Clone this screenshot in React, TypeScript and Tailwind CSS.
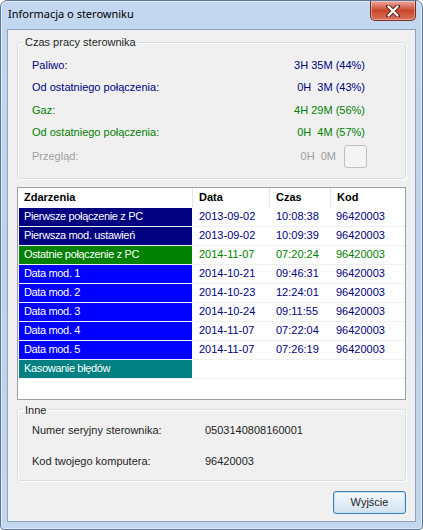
const rows = [
  { name: 'Pierwsze połączenie z PC', date: '2013-09-02', time: '10:08:38', code: '96420003', cell: 'bg-[#000080]', text: 'text-[#000080]' },
  { name: 'Pierwsza mod. ustawień', date: '2013-09-02', time: '10:09:39', code: '96420003', cell: 'bg-[#000080]', text: 'text-[#000080]' },
  { name: 'Ostatnie połączenie z PC', date: '2014-11-07', time: '07:20:24', code: '96420003', cell: 'bg-[#008000]', text: 'text-[#008000]' },
  { name: 'Data mod. 1', date: '2014-10-21', time: '09:46:31', code: '96420003', cell: 'bg-[#0000ff]', text: 'text-[#000080]' },
  { name: 'Data mod. 2', date: '2014-10-23', time: '12:24:01', code: '96420003', cell: 'bg-[#0000ff]', text: 'text-[#000080]' },
  { name: 'Data mod. 3', date: '2014-10-24', time: '09:11:55', code: '96420003', cell: 'bg-[#0000ff]', text: 'text-[#000080]' },
  { name: 'Data mod. 4', date: '2014-11-07', time: '07:22:04', code: '96420003', cell: 'bg-[#0000ff]', text: 'text-[#000080]' },
  { name: 'Data mod. 5', date: '2014-11-07', time: '07:26:19', code: '96420003', cell: 'bg-[#0000ff]', text: 'text-[#000080]' },
  { name: 'Kasowanie błędów', date: '', time: '', code: '', cell: 'bg-[#008080]', text: 'text-[#000080]' },
];

const usage = [
  { label: 'Paliwo:', value: '3H 35M (44%)', color: 'text-[#000080]' },
  { label: 'Od ostatniego połączenia:', value: '0H  3M (43%)', color: 'text-[#000080]' },
  { label: 'Gaz:', value: '4H 29M (56%)', color: 'text-[#008000]' },
  { label: 'Od ostatniego połączenia:', value: '0H  4M (57%)', color: 'text-[#008000]' },
];

const CloseButton = () => (
  <div className="w-[46px] h-[20px] rounded-b-[5px] border border-t-0 border-[#7a2f22] bg-gradient-to-b from-[#e9a99b] via-[#c9452c] to-[#d7735a] flex items-center justify-center shadow-[inset_0_0_0_1px_rgba(255,255,255,0.35)]">
    <svg width="14" height="12" viewBox="0 0 14 12">
      <path d="M2 1 L12 11 M12 1 L2 11" stroke="#5a2018" strokeWidth="4.2" strokeLinecap="round" fill="none" />
      <path d="M2.5 1.5 L11.5 10.5 M11.5 1.5 L2.5 10.5" stroke="#ffffff" strokeWidth="2.4" strokeLinecap="round" fill="none" />
    </svg>
  </div>
);

export default function App() {
  return (
    <div className="w-[423px] h-[530px] rounded-t-[7px] rounded-b-[4px] border border-[#5b7697] bg-gradient-to-b from-[#c3d8f0] via-[#bcd2ec] to-[#c2d6ee] shadow-[inset_0_0_0_1px_rgba(255,255,255,0.55)] flex flex-col font-['Liberation_Sans',sans-serif] text-[11px] overflow-hidden">
      <div className="h-[28px] flex items-start justify-between pl-[7px] pr-[6px]">
        <div className="pt-[5px] text-[11px] text-black font-['Noto_Sans',sans-serif]">Informacja o sterowniku</div>
        <CloseButton />
      </div>
      <div className="mx-[6px] mb-[7px] flex-1 border border-[#8ca3c0] bg-[#f0f0f0] flex flex-col px-[9px] pt-[4px]">
        <fieldset className="border border-[#d5dfe5] rounded-[3px] shadow-[1px_1px_0_#fff,inset_1px_1px_0_#fff] px-[14px] pb-[8px]">
          <legend className="ml-[-9px] px-[2px] text-[#1e1e1e]">Czas pracy sterownika</legend>
          <div className="flex flex-col pt-[3px]">
            {usage.map((u, i) => (
              <div key={i} className={`h-[22.5px] flex items-center justify-between pr-[26px] ${u.color}`}>
                <span>{u.label}</span>
                <span className="whitespace-pre">{u.value}</span>
              </div>
            ))}
            <div className="h-[26px] flex items-center justify-between text-[#a0a0a0]">
              <span>Przegląd:</span>
              <div className="flex items-center gap-[8px] pr-[24px]">
                <span className="whitespace-pre">0H  0M</span>
                <div className="w-[23px] h-[23px] rounded-[3px] border border-[#c0c0c0] bg-[#f4f4f4]" />
              </div>
            </div>
          </div>
        </fieldset>

        <div className="mt-[8px] h-[213px] border border-[#9a9fa6] bg-white flex flex-col pl-[1px]">
          <div className="h-[20px] grid grid-cols-[174px_77px_61px_1fr] items-center text-black font-bold">
            <div className="pl-[5px] border-r border-[#e3e6ea] h-full flex items-center">Zdarzenia</div>
            <div className="pl-[6px] border-r border-[#e3e6ea] h-full flex items-center">Data</div>
            <div className="pl-[6px] border-r border-[#e3e6ea] h-full flex items-center">Czas</div>
            <div className="pl-[6px] h-full flex items-center">Kod</div>
          </div>
          {rows.map((r) => (
            <div key={r.name} className={`h-[19px] grid grid-cols-[174px_77px_61px_1fr] border-b border-[#f0f0f0] ${r.text}`}>
              <div className={`${r.cell} text-white pl-[5px] flex items-center mr-[1px] tracking-[-0.35px]`}>{r.name}</div>
              <div className="pl-[6px] flex items-center">{r.date}</div>
              <div className="pl-[6px] flex items-center">{r.time}</div>
              <div className="pl-[5px] flex items-center">{r.code}</div>
            </div>
          ))}
        </div>

        <fieldset className="mt-[2px] border border-[#d5dfe5] rounded-[3px] shadow-[1px_1px_0_#fff,inset_1px_1px_0_#fff] px-[14px] pb-[1px]">
          <legend className="ml-[-9px] px-[2px] text-[#1e1e1e]">Inne</legend>
          <div className="grid grid-cols-[173px_1fr] text-[#1e1e1e]">
            <div className="h-[25px] flex items-center">Numer seryjny sterownika:</div>
            <div className="h-[25px] flex items-center">0503140808160001</div>
            <div className="h-[36px] flex items-center">Kod twojego komputera:</div>
            <div className="h-[36px] flex items-center">96420003</div>
          </div>
        </fieldset>

        <div className="flex justify-end mt-[10px]">
          <button className="w-[73px] h-[23px] rounded-[3px] border border-[#3c7fb1] bg-gradient-to-b from-[#f3f9fd] via-[#e3eef7] to-[#cfe2f0] shadow-[inset_0_0_0_1px_#bfe3fa] text-[#1e1e1e] text-[11px] font-['Liberation_Sans',sans-serif]">
            Wyjście
          </button>
        </div>
      </div>
    </div>
  );
}
